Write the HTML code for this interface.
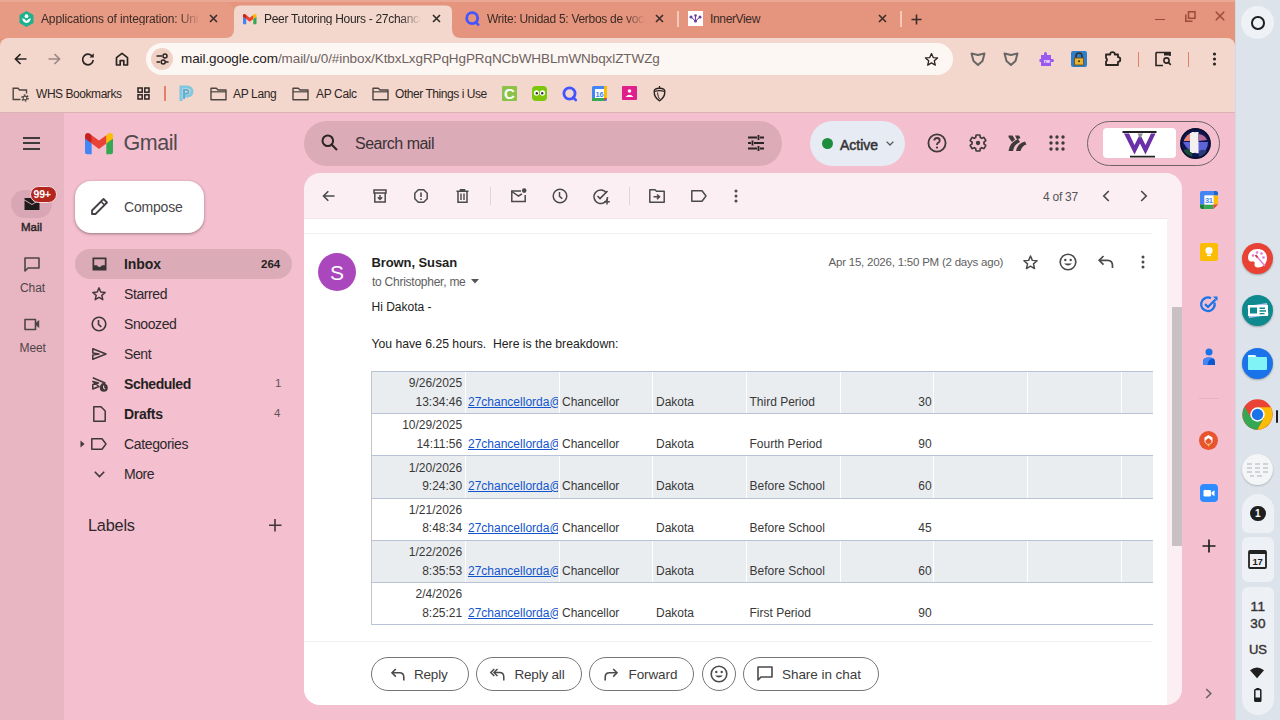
<!DOCTYPE html>
<html><head><meta charset="utf-8">
<style>
*{box-sizing:border-box;margin:0;padding:0}
html,body{width:1280px;height:720px;overflow:hidden;background:#F4BFCF;font-family:"Liberation Sans",sans-serif;color:#202124}
.a{position:absolute}
svg.a{overflow:visible}
.t{position:absolute;white-space:nowrap;line-height:1}
.fade{-webkit-mask-image:linear-gradient(90deg,#000 84%,transparent 97%)}
</style></head><body>
<!-- ===== TAB STRIP ===== -->
<div class="a" style="left:0;top:0;width:1235px;height:50px;background:#E5947D"></div>
<div class="a" style="left:0;top:0;width:1235px;height:1.5px;background:#EAA793"></div>
<!-- hovered tab 1 -->
<div class="a" style="left:-8px;top:2px;width:242px;height:36px;background:#E79B85;border-radius:9px"></div>
<!-- active tab -->
<svg class="a" style="left:0;top:0" width="1235" height="40"><path d="M225,38 Q234,38 234,29 L234,11.5 Q234,5.5 240,5.5 L446,5.5 Q452,5.5 452,11.5 L452,29 Q452,38 461,38 Z" fill="#F3D7CD"/></svg>
<!-- tab 1 content -->
<svg class="a" style="left:19px;top:11px" width="15" height="16" viewBox="0 0 15 16"><path d="M7.5,0 L14.5,4 L14.5,12 L7.5,16 L0.5,12 L0.5,4Z" fill="#1FB08D"/><circle cx="7.5" cy="5.2" r="1.9" fill="#fff"/><path d="M3.2,7.3 Q3.5,11.5 7.5,12 Q11.5,11.5 11.8,7.3 Q9.5,7.6 7.5,10 Q5.5,7.6 3.2,7.3Z" fill="#fff"/></svg>
<div class="t fade" style="left:41px;top:12.7px;font-size:12px;color:#3B2A25;width:164px;overflow:hidden;letter-spacing:-0.15px">Applications of integration: Uni</div>
<svg class="a" style="left:209px;top:14px" width="9" height="9"><path d="M1,1L8,8M8,1L1,8" stroke="#3A2E2A" stroke-width="1.6"/></svg>
<!-- tab 2 active -->
<svg class="a" style="left:242.5px;top:13.5px" width="13.5" height="10.3" viewBox="3 8 42 32"><path fill="#34A853" d="M45,16.2l-5,2.75l-5,4.75L35,40h7c1.657,0,3-1.343,3-3V16.2z"/><path fill="#4285F4" d="M3,16.2l3.614,1.71L13,23.7V40H6c-1.657,0-3-1.343-3-3V16.2z"/><polygon fill="#EA4335" points="35,11.2 24,19.45 13,11.2 12,17 13,23.7 24,31.95 35,23.7 36,17"/><path fill="#C5221F" d="M3,12.298V16.2l10,7.5V11.2L9.876,8.859C9.132,8.301,8.228,8,7.298,8h0C4.924,8,3,9.924,3,12.298z"/><path fill="#FBBC04" d="M45,12.298V16.2l-10,7.5V11.2l3.124-2.341C38.868,8.301,39.772,8,40.702,8h0C43.076,8,45,9.924,45,12.298z"/></svg>
<div class="t fade" style="left:264px;top:12.7px;font-size:12px;color:#2A2624;width:162px;overflow:hidden;letter-spacing:-0.3px">Peer Tutoring Hours - 27chancellorda</div>
<svg class="a" style="left:432px;top:14px" width="9" height="9"><path d="M1,1L8,8M8,1L1,8" stroke="#2E2A28" stroke-width="1.6"/></svg>
<!-- tab 3 -->
<svg class="a" style="left:465px;top:11px" width="15" height="15" viewBox="0 0 15 15"><circle cx="7.2" cy="7.2" r="5.5" stroke="#4255FF" stroke-width="2.8" fill="none"/><path d="M10.8,11.2 L13.2,13.6" stroke="#4255FF" stroke-width="2.6" stroke-linecap="round"/></svg>
<div class="t fade" style="left:487px;top:12.7px;font-size:12px;color:#3B2A25;width:163px;overflow:hidden;letter-spacing:-0.28px">Write: Unidad 5: Verbos de vocabulario</div>
<svg class="a" style="left:655px;top:14px" width="9" height="9"><path d="M1,1L8,8M8,1L1,8" stroke="#3A2E2A" stroke-width="1.6"/></svg>
<div class="a" style="left:677px;top:11px;width:1.5px;height:16px;background:#F5C8BA"></div>
<!-- tab 4 -->
<div class="a" style="left:688px;top:11px;width:15px;height:15px;background:#fff"></div>
<svg class="a" style="left:688px;top:11px" width="15" height="15"><g fill="#6B3FA0"><circle cx="3" cy="6" r="1.5"/><circle cx="12" cy="6" r="1.5"/><circle cx="7.5" cy="4.5" r="1.3"/><circle cx="7.5" cy="10" r="1.6"/></g><path d="M3,6L7.5,10L12,6M7.5,4.5V10" stroke="#6B3FA0" stroke-width="1" fill="none"/></svg>
<div class="t" style="left:710px;top:12.7px;font-size:12px;color:#3B2A25;letter-spacing:-0.35px">InnerView</div>
<svg class="a" style="left:878px;top:14px" width="9" height="9"><path d="M1,1L8,8M8,1L1,8" stroke="#3A2E2A" stroke-width="1.6"/></svg>
<div class="a" style="left:900px;top:11px;width:1.5px;height:16px;background:#F5C8BA"></div>
<svg class="a" style="left:911px;top:14px" width="11" height="11"><path d="M5.5,0.5V10.5M0.5,5.5H10.5" stroke="#3A2E2A" stroke-width="1.6"/></svg>
<!-- window controls -->
<div class="a" style="left:1155px;top:18.5px;width:10px;height:1.6px;background:#9B4B37"></div>
<svg class="a" style="left:1185px;top:11px" width="11" height="11"><rect x="3.5" y="0.8" width="6.5" height="6.5" stroke="#9B4B37" stroke-width="1.5" fill="none"/><path d="M0.8,3.5V10.2H7.5" stroke="#9B4B37" stroke-width="1.5" fill="none"/></svg>
<svg class="a" style="left:1215px;top:11px" width="10" height="10"><path d="M0.8,0.8L9.2,9.2M9.2,0.8L0.8,9.2" stroke="#9B4B37" stroke-width="1.5"/></svg>

<!-- ===== TOOLBAR ===== -->
<div class="a" style="left:0;top:37.5px;width:1235px;height:74.5px;background:#F3D7CD;border-radius:8px 8px 0 0"></div>
<div class="a" style="left:0;top:112px;width:1235px;height:1px;background:#D9B3B6"></div>
<!-- nav -->
<svg class="a" style="left:14px;top:53px" width="13" height="12"><path d="M12.5,6H1.5M6.5,1L1.5,6L6.5,11" stroke="#2B2522" stroke-width="1.7" fill="none"/></svg>
<svg class="a" style="left:48px;top:53px" width="13" height="12"><path d="M0.5,6H11.5M6.5,1L11.5,6L6.5,11" stroke="#9C8984" stroke-width="1.7" fill="none"/></svg>
<svg class="a" style="left:81px;top:52px" width="14" height="14"><path d="M11.3,4.5A5.3,5.3 0 1 0 12.2,8" stroke="#2B2522" stroke-width="1.7" fill="none"/><path d="M12.8,1.3V5.6H8.5Z" fill="#2B2522"/></svg>
<svg class="a" style="left:115px;top:52px" width="14" height="14"><path d="M1.5,13V5.7L7,1.3L12.5,5.7V13H8.8V8.6H5.2V13Z" stroke="#2B2522" stroke-width="1.7" fill="none" stroke-linejoin="round"/></svg>
<!-- omnibox -->
<div class="a" style="left:146px;top:43px;width:807px;height:32px;background:#FDF7F4;border-radius:16px"></div>
<div class="a" style="left:151px;top:48px;width:22px;height:22px;background:#F0D1C6;border-radius:11px"></div>
<svg class="a" style="left:156px;top:53px" width="13" height="12"><path d="M0.5,3H6M0.5,9H4" stroke="#2B2522" stroke-width="1.5"/><circle cx="9" cy="3" r="2" stroke="#2B2522" stroke-width="1.5" fill="none"/><circle cx="7.2" cy="9" r="2" stroke="#2B2522" stroke-width="1.5" fill="none"/><path d="M9.3,9H12.5" stroke="#2B2522" stroke-width="1.5"/></svg>
<div class="t" style="left:181px;top:52.3px;font-size:13.5px;color:#1F1B19;letter-spacing:-0.09px">mail.google.com<span style="color:#6F625E">/mail/u/0/#inbox/KtbxLxgRPqHgPRqNCbWHBLmWNbqxlZTWZg</span></div>
<svg class="a" style="left:924px;top:52px" width="15" height="15" viewBox="0 0 24 24"><path d="M12,2.5L14.8,8.9L21.7,9.5L16.5,14.1L18.1,20.9L12,17.3L5.9,20.9L7.5,14.1L2.3,9.5L9.2,8.9Z" stroke="#2B2522" stroke-width="2.1" fill="none" stroke-linejoin="round"/></svg>
<!-- extensions -->
<svg class="a" style="left:970px;top:51px" width="16" height="16" viewBox="0 0 16 16"><path d="M1.5,2.5L8,4L14.5,2.5L12.5,10L8,14L3.5,10Z" stroke="#6A6665" stroke-width="2" fill="none" stroke-linejoin="round"/></svg>
<svg class="a" style="left:1003px;top:51px" width="16" height="16" viewBox="0 0 16 16"><path d="M1.5,2.5L8,4L14.5,2.5L12.5,10L8,14L3.5,10Z" stroke="#6A6665" stroke-width="2" fill="none" stroke-linejoin="round"/></svg>
<svg class="a" style="left:1038px;top:51px" width="16" height="16" viewBox="0 0 16 16"><path d="M3,4H6V2.5A1.5,1.5 0 0 1 9,2.5V4H13V8H14.5A1.5,1.5 0 0 1 14.5,11H13V15H3V11H1.5V8H3Z" fill="#9B59F0"/><text x="6" y="12" font-size="5" fill="#fff" font-family="Liberation Sans" font-weight="bold">rw</text></svg>
<div class="a" style="left:1071px;top:51px;width:16px;height:16px;background:#2F7FC8;border-radius:2px"></div>
<svg class="a" style="left:1071px;top:51px" width="16" height="16"><path d="M5,7V5A3,3 0 0 1 11,5V7" stroke="#333" stroke-width="1.6" fill="none"/><rect x="3.5" y="7" width="9" height="7" fill="#E9B330" stroke="#6b4a12" stroke-width=".8"/><circle cx="8" cy="10.3" r="1" fill="#333"/></svg>
<svg class="a" style="left:1104px;top:50px" width="18" height="18" viewBox="0 0 18 18"><path d="M2,4.5H6.2A2.3,2.3 0 0 1 10.8,4.5H14V7.2A2.3,2.3 0 0 1 14,11.8V15H2V11.5A2,2 0 0 0 2,8Z" stroke="#2B2522" stroke-width="1.8" fill="none" stroke-linejoin="round"/></svg>
<div class="a" style="left:1138px;top:52px;width:1.2px;height:15px;background:#E5806B"></div>
<svg class="a" style="left:1155px;top:51px" width="17" height="16" viewBox="0 0 17 16"><path d="M1,1.5H15V5" stroke="#2B2522" stroke-width="1.6" fill="none"/><path d="M1,1.5V14.5H8" stroke="#2B2522" stroke-width="1.6" fill="none"/><rect x="9" y="1" width="6.5" height="3.5" fill="#2B2522"/><circle cx="11.5" cy="9.5" r="2.6" stroke="#2B2522" stroke-width="1.6" fill="none"/><path d="M13.4,11.4L15.8,13.8" stroke="#2B2522" stroke-width="1.7"/></svg>
<div class="a" style="left:1188px;top:52px;width:1.2px;height:15px;background:#E5806B"></div>
<svg class="a" style="left:1212px;top:52px" width="5" height="15"><circle cx="2.5" cy="2" r="1.6" fill="#2B2522"/><circle cx="2.5" cy="7" r="1.6" fill="#2B2522"/><circle cx="2.5" cy="12" r="1.6" fill="#2B2522"/></svg>

<!-- ===== BOOKMARKS ===== -->
<svg class="a" style="left:12px;top:87px" width="18" height="15" viewBox="0 0 18 15"><path d="M8.5,12.5H1.2V1.2H6L7.6,3H14.5V6.5" stroke="#4E4541" stroke-width="1.4" fill="none"/><circle cx="13" cy="11" r="3" stroke="#4E4541" stroke-width="1.6" stroke-dasharray="1.6 1.54" fill="none"/><circle cx="13" cy="11" r="1.9" stroke="#4E4541" stroke-width="1.1" fill="none"/></svg>
<div class="t" style="left:36px;top:88px;font-size:12px;color:#2E2623;letter-spacing:-0.45px">WHS Bookmarks</div>
<svg class="a" style="left:137px;top:87px" width="13" height="13"><rect x="1" y="1" width="4.2" height="4.2" stroke="#2B2522" stroke-width="1.5" fill="none"/><rect x="7.8" y="1" width="4.2" height="4.2" stroke="#2B2522" stroke-width="1.5" fill="none"/><rect x="1" y="7.8" width="4.2" height="4.2" stroke="#2B2522" stroke-width="1.5" fill="none"/><rect x="7.8" y="7.8" width="4.2" height="4.2" stroke="#2B2522" stroke-width="1.5" fill="none"/></svg>
<div class="a" style="left:164px;top:86px;width:1.5px;height:15px;background:#E5806B"></div>
<svg class="a" style="left:179px;top:85px" width="15" height="17" viewBox="0 0 15 17"><path d="M2,16V2H8.5A4.5,4.5 0 0 1 8.5,11H5" stroke="#7FC8E0" stroke-width="3" fill="none"/><path d="M5,14V5H8.3A1.8,1.8 0 0 1 8.3,8.5H6" stroke="#5AB3D6" stroke-width="2" fill="none"/></svg>
<svg class="a" style="left:210px;top:87px" width="17" height="14" viewBox="0 0 17 14"><path d="M1,1.2H6.3L8,3H16V12.8H1Z" stroke="#4E4541" stroke-width="1.4" fill="none" stroke-linejoin="round"/><path d="M1,4.8H16" stroke="#4E4541" stroke-width="1.2"/></svg>
<div class="t" style="left:233px;top:88px;font-size:12px;color:#2E2623;letter-spacing:-0.35px">AP Lang</div>
<svg class="a" style="left:292px;top:87px" width="17" height="14" viewBox="0 0 17 14"><path d="M1,1.2H6.3L8,3H16V12.8H1Z" stroke="#4E4541" stroke-width="1.4" fill="none" stroke-linejoin="round"/><path d="M1,4.8H16" stroke="#4E4541" stroke-width="1.2"/></svg>
<div class="t" style="left:316px;top:88px;font-size:12px;color:#2E2623;letter-spacing:-0.35px">AP Calc</div>
<svg class="a" style="left:372px;top:87px" width="17" height="14" viewBox="0 0 17 14"><path d="M1,1.2H6.3L8,3H16V12.8H1Z" stroke="#4E4541" stroke-width="1.4" fill="none" stroke-linejoin="round"/><path d="M1,4.8H16" stroke="#4E4541" stroke-width="1.2"/></svg>
<div class="t" style="left:395px;top:88px;font-size:12px;color:#2E2623;letter-spacing:-0.45px">Other Things i Use</div>
<!-- bookmark favicons -->
<div class="a" style="left:502px;top:86px;width:15px;height:15px;background:#8BC34A;border-radius:1px"></div>
<div class="t" style="left:504px;top:86px;font-size:15px;font-weight:bold;color:#fff">C</div>
<div class="a" style="left:532px;top:86px;width:15px;height:15px;background:#7AC70C;border-radius:4px"></div>
<svg class="a" style="left:532px;top:86px" width="15" height="15"><ellipse cx="4.5" cy="7" rx="2.6" ry="2.8" fill="#fff"/><ellipse cx="10.5" cy="7" rx="2.6" ry="2.8" fill="#fff"/><circle cx="4.8" cy="7.2" r="1.2" fill="#333"/><circle cx="10.2" cy="7.2" r="1.2" fill="#333"/><path d="M6.5,10L7.5,11.5L8.5,10Z" fill="#F49000"/></svg>
<svg class="a" style="left:562px;top:86px" width="16" height="16"><circle cx="7.5" cy="7.5" r="5.6" stroke="#4255FF" stroke-width="2.8" fill="none"/><path d="M11.2,11.5L13.8,14" stroke="#4255FF" stroke-width="2.6" stroke-linecap="round"/></svg>
<svg class="a" style="left:592px;top:86px" width="15" height="15" viewBox="0 0 15 15"><rect x="0" y="0" width="15" height="15" rx="1.5" fill="#4285F4"/><rect x="12" y="0" width="3" height="12" fill="#FBBC04"/><rect x="0" y="12" width="12" height="3" fill="#34A853"/><path d="M12,12H15L12,15Z" fill="#EA4335"/><rect x="3" y="3" width="9" height="9" fill="#fff"/><text x="3.4" y="10.8" font-size="7.5" fill="#4285F4" font-family="Liberation Sans" font-weight="bold">16</text></svg>
<div class="a" style="left:622px;top:86px;width:15px;height:14px;background:#E01E8C;border-radius:1px"></div>
<svg class="a" style="left:622px;top:86px" width="15" height="14"><circle cx="7.5" cy="5" r="1.8" fill="#fff"/><path d="M3.5,11Q7.5,6.5 11.5,11Z" fill="#fff"/></svg>
<svg class="a" style="left:653px;top:85px" width="13" height="17" viewBox="0 0 13 17"><path d="M6.5,1V3.2" stroke="#2B2522" stroke-width="1.3"/><path d="M1.2,6.5Q1,3.3 6.5,3.3Q12,3.3 11.8,6.5Q12,12.5 6.5,15.8Q1,12.5 1.2,6.5Z" stroke="#2B2522" stroke-width="1.4" fill="none"/><path d="M1.5,6.5Q6.5,4.8 11.5,6.5" stroke="#2B2522" stroke-width="1.3" fill="none"/><path d="M4.5,7.5Q5,12 6.5,14" stroke="#2B2522" stroke-width="1" fill="none"/></svg>

<!-- ===== SHELF ===== -->
<div class="a" style="left:1235px;top:0;width:45px;height:720px;background:#DCE3EA;border-left:1px solid #D2D9E0"></div>
<div class="a" style="left:1241px;top:6px;width:33px;height:33px;background:#EEF1F6;border-radius:50%"></div>
<div class="a" style="left:1251px;top:16px;width:13.5px;height:13.5px;border:2.2px solid #1F1F1F;border-radius:50%"></div>

<!-- ===== GMAIL ===== -->
<div class="a" style="left:0;top:113px;width:64px;height:607px;background:#E8B5C3"></div>
<!-- hamburger -->
<div class="a" style="left:23px;top:136.5px;width:17px;height:2px;background:#3F3A3C"></div>
<div class="a" style="left:23px;top:142px;width:17px;height:2px;background:#3F3A3C"></div>
<div class="a" style="left:23px;top:147.5px;width:17px;height:2px;background:#3F3A3C"></div>
<!-- M logo -->
<svg class="a" style="left:85px;top:133px" width="28" height="21.3" viewBox="3 8 42 32"><path fill="#34A853" d="M45,16.2l-5,2.75l-5,4.75L35,40h7c1.657,0,3-1.343,3-3V16.2z"/><path fill="#4285F4" d="M3,16.2l3.614,1.71L13,23.7V40H6c-1.657,0-3-1.343-3-3V16.2z"/><polygon fill="#EA4335" points="35,11.2 24,19.45 13,11.2 12,17 13,23.7 24,31.95 35,23.7 36,17"/><path fill="#C5221F" d="M3,12.298V16.2l10,7.5V11.2L9.876,8.859C9.132,8.301,8.228,8,7.298,8h0C4.924,8,3,9.924,3,12.298z"/><path fill="#FBBC04" d="M45,12.298V16.2l-10,7.5V11.2l3.124-2.341C38.868,8.301,39.772,8,40.702,8h0C43.076,8,45,9.924,45,12.298z"/></svg>
<div class="t" style="left:123.5px;top:132.8px;font-size:21.5px;color:#4F4B4D;letter-spacing:-0.45px">Gmail</div>
<!-- rail -->
<div class="a" style="left:11px;top:190px;width:41px;height:28px;background:#D8A6B4;border-radius:14px"></div>
<svg class="a" style="left:24px;top:197px" width="16" height="14" viewBox="0 0 16 14"><path d="M0.5,3.5L8,8L15.5,3.5V13H0.5Z" fill="#1F1B1D"/><path d="M0.5,1H15.5V2.5L8,7L0.5,2.5Z" fill="#1F1B1D"/></svg>
<div class="a" style="left:30px;top:185.5px;width:27px;height:17.5px;background:#B3261E;border:1.5px solid #F6DDE3;border-radius:9px"></div>
<div class="t" style="left:33.5px;top:189px;font-size:10.5px;font-weight:bold;color:#fff;letter-spacing:-0.2px">99+</div>
<div class="t" style="left:21px;top:222px;font-size:11.5px;-webkit-text-stroke:0.45px #2B2527;color:#2B2527;letter-spacing:0px">Mail</div>
<svg class="a" style="left:24px;top:257px" width="16" height="15" viewBox="0 0 16 15"><path d="M1,1H15V11H4L1,14Z" stroke="#4E4548" stroke-width="1.6" fill="none" stroke-linejoin="round"/></svg>
<div class="t" style="left:20px;top:282.4px;font-size:12px;color:#4E4548;letter-spacing:-0.1px">Chat</div>
<svg class="a" style="left:24px;top:318px" width="16" height="13" viewBox="0 0 16 13"><path d="M1,1.5H11.5V11.5H1Z" stroke="#4E4548" stroke-width="1.6" fill="none" stroke-linejoin="round"/><path d="M11.5,5L15.2,2V10L11.5,7Z" fill="#4E4548"/></svg>
<div class="t" style="left:19.5px;top:342px;font-size:12px;color:#4E4548;letter-spacing:-0.1px">Meet</div>
<!-- compose -->
<div class="a" style="left:75px;top:181px;width:129px;height:52px;background:#fff;border-radius:16px;box-shadow:0 1px 2px rgba(60,40,50,.3),0 1px 3px 1px rgba(60,40,50,.15)"></div>
<svg class="a" style="left:90px;top:197px" width="19" height="19" viewBox="0 0 19 19"><path d="M2,17V13.5L13.5,2L17,5.5L5.5,17Z" stroke="#444046" stroke-width="1.8" fill="none" stroke-linejoin="round"/><path d="M11,4.5L14.5,8" stroke="#444046" stroke-width="1.6"/></svg>
<div class="t" style="left:124px;top:200px;font-size:14px;color:#4A4649;letter-spacing:-0.2px">Compose</div>
<!-- nav list -->
<div class="a" style="left:75px;top:249px;width:217px;height:30px;background:#DCABB8;border-radius:15px"></div>
<svg class="a" style="left:92px;top:257px" width="15" height="14" viewBox="0 0 15 14"><path d="M0.5,0.5H14.5V13.5H0.5Z" fill="#3B3437"/><path d="M2.2,2.2H12.8V8.2H10Q9.3,10 7.5,10Q5.7,10 5,8.2H2.2Z" fill="#DCABB8"/></svg>
<div class="t" style="left:124px;top:257px;font-size:14px;font-weight:bold;color:#241F21;letter-spacing:-0.1px">Inbox</div>
<div class="t" style="left:261px;top:258.8px;font-size:11.5px;font-weight:bold;color:#241F21">264</div>
<svg class="a" style="left:91px;top:286px" width="16" height="16" viewBox="0 0 24 24"><path d="M12,2.8L14.6,9L21.3,9.6L16.2,14L17.7,20.6L12,17.2L6.3,20.6L7.8,14L2.7,9.6L9.4,9Z" stroke="#3F383B" stroke-width="2.2" fill="none" stroke-linejoin="round"/></svg>
<div class="t" style="left:124px;top:287px;font-size:14px;color:#2E282B;letter-spacing:-0.4px">Starred</div>
<svg class="a" style="left:91px;top:316px" width="16" height="16" viewBox="0 0 16 16"><circle cx="8" cy="8" r="6.8" stroke="#3F383B" stroke-width="1.6" fill="none"/><path d="M7.5,4V8.3L10.3,10.8" stroke="#3F383B" stroke-width="1.6" fill="none"/></svg>
<div class="t" style="left:124px;top:317px;font-size:14px;color:#2E282B;letter-spacing:-0.4px">Snoozed</div>
<svg class="a" style="left:92px;top:348px" width="15" height="12" viewBox="0 0 15 12"><path d="M0.8,0.8L14,6L0.8,11.2V7L7,6L0.8,5Z" stroke="#3F383B" stroke-width="1.5" fill="none" stroke-linejoin="round"/></svg>
<div class="t" style="left:124px;top:347px;font-size:14px;color:#2E282B;letter-spacing:-0.4px">Sent</div>
<svg class="a" style="left:92px;top:377px" width="16" height="15" viewBox="0 0 16 15"><path d="M0.8,0.8L13,6L9.5,7.5M7,9.5L0.8,12V7.5L6.5,6L0.8,4.5Z" stroke="#3F383B" stroke-width="1.5" fill="none" stroke-linejoin="round"/><circle cx="11.8" cy="10.8" r="4" fill="#3F383B"/><path d="M11.6,8.6V11L13.1,12.1" stroke="#F4BFCF" stroke-width="1.1" fill="none"/></svg>
<div class="t" style="left:124px;top:377px;font-size:14px;font-weight:bold;color:#241F21;letter-spacing:-0.45px">Scheduled</div>
<div class="t" style="left:275px;top:378px;font-size:11.5px;color:#5C5457">1</div>
<svg class="a" style="left:93px;top:406px" width="13" height="16" viewBox="0 0 13 16"><path d="M0.8,0.8H8L12.2,5V15.2H0.8Z" stroke="#3F383B" stroke-width="1.5" fill="none" stroke-linejoin="round"/></svg>
<div class="t" style="left:124px;top:407px;font-size:14px;font-weight:bold;color:#241F21;letter-spacing:-0.3px">Drafts</div>
<div class="t" style="left:274px;top:408px;font-size:11.5px;color:#5C5457">4</div>
<svg class="a" style="left:80px;top:440px" width="5" height="8"><path d="M0.5,0.5L4.5,4L0.5,7.5Z" fill="#3F383B"/></svg>
<svg class="a" style="left:91px;top:438px" width="16" height="12" viewBox="0 0 16 12"><path d="M0.8,0.8H11L15,6L11,11.2H0.8Z" stroke="#3F383B" stroke-width="1.5" fill="none" stroke-linejoin="round"/></svg>
<div class="t" style="left:124px;top:437px;font-size:14px;color:#2E282B;letter-spacing:-0.35px">Categories</div>
<svg class="a" style="left:94px;top:471px" width="11" height="7"><path d="M0.8,0.8L5.5,5.5L10.2,0.8" stroke="#3F383B" stroke-width="1.6" fill="none"/></svg>
<div class="t" style="left:124px;top:467px;font-size:14px;color:#2E282B;letter-spacing:-0.45px">More</div>
<div class="t" style="left:88px;top:517px;font-size:16.3px;color:#2E282B;letter-spacing:-0.2px">Labels</div>
<svg class="a" style="left:269px;top:519px" width="12" height="12"><path d="M6,0V12.5M0,6.2H12.5" stroke="#3F383B" stroke-width="1.6"/></svg>

<!-- header -->
<div class="a" style="left:304px;top:121px;width:478px;height:45px;background:#DCABB8;border-radius:23px"></div>
<svg class="a" style="left:321px;top:134px" width="17" height="17" viewBox="0 0 17 17"><circle cx="6.8" cy="6.8" r="5.3" stroke="#2A2426" stroke-width="2" fill="none"/><path d="M10.6,10.6L16,16" stroke="#2A2426" stroke-width="2.1"/></svg>
<div class="t" style="left:355px;top:135.6px;font-size:16px;color:#3A3235;letter-spacing:-0.5px">Search mail</div>
<svg class="a" style="left:747px;top:134px" width="18" height="18" viewBox="0 0 18 18"><path d="M1,3.5H10M13,3.5H17M1,9H4M7,9H17M1,14.5H10M13,14.5H17" stroke="#2A2426" stroke-width="1.9"/><path d="M11.5,1V6M5.5,6.5V11.5M11.5,12V17" stroke="#2A2426" stroke-width="1.9"/></svg>
<div class="a" style="left:810px;top:121px;width:95px;height:45px;background:#E7EBF3;border-radius:23px"></div>
<div class="a" style="left:821.5px;top:137.5px;width:11px;height:11px;background:#1E8E3E;border-radius:50%"></div>
<div class="t" style="left:840px;top:137.5px;font-size:14px;-webkit-text-stroke:0.5px #353235;color:#353235;letter-spacing:0px">Active</div>
<svg class="a" style="left:886px;top:141px" width="8" height="5"><path d="M0.6,0.6L4,4L7.4,0.6" stroke="#555" stroke-width="1.3" fill="none"/></svg>
<svg class="a" style="left:927px;top:133px" width="20" height="20" viewBox="0 0 20 20"><circle cx="10" cy="10" r="8.6" stroke="#3F3A3C" stroke-width="1.8" fill="none"/><path d="M7.3,7.6Q7.3,5 10,5Q12.7,5 12.7,7.4Q12.7,9 10.8,10Q10,10.5 10,12" stroke="#3F3A3C" stroke-width="1.8" fill="none"/><circle cx="10" cy="14.6" r="1.1" fill="#3F3A3C"/></svg>
<svg class="a" style="left:968px;top:133px" width="20" height="20" viewBox="0 0 24 24"><path d="M19.14,12.94c.04-.3.06-.61.06-.94 0-.32-.02-.64-.07-.94l2.03-1.58c.18-.14.23-.41.12-.61l-1.92-3.32c-.12-.22-.37-.29-.59-.22l-2.39.96c-.5-.38-1.03-.7-1.62-.94L14.4,2.81c-.04-.24-.24-.41-.48-.41h-3.84c-.24,0-.43.17-.47.41L9.25,5.35C8.66,5.59 8.12,5.92 7.63,6.29L5.24,5.33c-.22-.08-.47,0-.59.22L2.74,8.87C2.62,9.08 2.66,9.34 2.86,9.48l2.03,1.58C4.84,11.36 4.8,11.69 4.8,12s.02.64.07.94l-2.03,1.58c-.18.14-.23.41-.12.61l1.92,3.32c.12.22.37.29.59.22l2.39-.96c.5.38 1.03.7 1.62.94l.36,2.54c.05.24.24.41.48.41h3.84c.24,0 .44-.17.47-.41l.36-2.54c.59-.24 1.13-.56 1.62-.94l2.39.96c.22.08.47,0 .59-.22l1.92-3.32c.12-.22.07-.47-.12-.61L19.14,12.94z" stroke="#3F3A3C" stroke-width="2" fill="none"/><circle cx="12" cy="12" r="2.6" fill="#3F3A3C"/></svg>
<svg class="a" style="left:1008px;top:135px" width="19" height="16" viewBox="0 0 19 16"><path d="M0.5,0.5H4.5L7,4.5L4,7L0.5,2Z" fill="#3F3A3C"/><path d="M0.5,16Q2,7 10,4L12,7Q6,9.5 5,16Z" fill="#3F3A3C"/><path d="M7,0.5H11L12.5,3L9,4.5Z" fill="#3F3A3C"/><path d="M8,16Q9.5,8 17,6.5L18.5,9.5Q14,10.5 12.5,16Z" fill="#3F3A3C"/></svg>
<svg class="a" style="left:1049px;top:135px" width="16" height="16"><g fill="#3F3A3C"><circle cx="2" cy="2" r="1.7"/><circle cx="8" cy="2" r="1.7"/><circle cx="14" cy="2" r="1.7"/><circle cx="2" cy="8" r="1.7"/><circle cx="8" cy="8" r="1.7"/><circle cx="14" cy="8" r="1.7"/><circle cx="2" cy="14" r="1.7"/><circle cx="8" cy="14" r="1.7"/><circle cx="14" cy="14" r="1.7"/></g></svg>
<div class="a" style="left:1087px;top:121px;width:133px;height:45px;border:1px solid #6E6468;border-radius:23px"></div>
<div class="a" style="left:1103px;top:128px;width:73px;height:30px;background:#fff;border-radius:4px"></div>
<svg class="a" style="left:1099px;top:128px" width="73" height="30" viewBox="0 0 73 30"><path d="M23.5,4H57.5M31,28.6H56" stroke="#222" stroke-width="1.8"/><path d="M25,5.5L35.5,26.5L41,15.5L46.5,26.5L56.5,5.5H52L46.5,17L41,6L35.5,17L30,5.5Z" fill="#6B2FA8"/><path d="M38.5,5.5H44L41.2,10.5Z" fill="#8a8a8a"/></svg>
<svg class="a" style="left:1180px;top:127.5px" width="31" height="31" viewBox="0 0 31 31"><defs><clipPath id="av"><circle cx="15.5" cy="15.5" r="15"/></clipPath></defs><g clip-path="url(#av)"><rect width="31" height="31" fill="#0E1650"/><path d="M4,12Q7,6 12,5L12,13H4Z" fill="#E98878"/><path d="M19,6Q25,7 27,12L19,13Z" fill="#B86A9A"/><path d="M3,14H28Q28,23 20,26Q9,26 3,14Z" fill="#5F63D8"/><path d="M4,22Q9,19 13,24L11,31H4Z" fill="#1A4A3A"/><path d="M19,23Q24,20 27,24L26,31H19Z" fill="#2A3A7A"/><rect x="11.5" y="4" width="7" height="21" fill="#F4F0F4"/><rect x="14.5" y="4" width="1" height="21" fill="#B8B0C0"/></g><circle cx="15.5" cy="15.5" r="14.6" stroke="#0A0F2E" stroke-width="1.6" fill="none"/></svg>
<div class="a" style="left:1190px;top:133px;width:8px;height:19px;background:#F4F0F2"></div>

<!-- main panel -->
<div class="a" style="left:304px;top:173px;width:878px;height:532px;background:#FCEFF3;border-radius:16px;overflow:hidden">
  <div class="a" style="left:0;top:46px;width:863px;height:486px;background:#fff"></div>
  <div class="a" style="left:0;top:45px;width:863px;height:1px;background:#F2E6EA"></div>
  <div class="a" style="left:0;top:60px;width:848px;height:1px;background:#EEF0F2"></div>
  <div class="a" style="left:868px;top:134px;width:10px;height:239px;background:#C9C0C3"></div>
</div>
<!-- panel toolbar -->
<svg class="a" style="left:322px;top:190px" width="13" height="12" viewBox="0 0 13 12"><path d="M12.5,6H1.5M6.3,1.2L1.5,6L6.3,10.8" stroke="#4A4A4A" stroke-width="1.6" fill="none"/></svg>
<svg class="a" style="left:373px;top:189px" width="14" height="14" viewBox="0 0 14 14"><path d="M1,1H13V4H1Z" stroke="#4A4A4A" stroke-width="1.5" fill="none"/><path d="M1.8,4V13H12.2V4" stroke="#4A4A4A" stroke-width="1.5" fill="none"/><path d="M7,6V10.5M4.8,8.3L7,10.5L9.2,8.3" stroke="#4A4A4A" stroke-width="1.5" fill="none"/></svg>
<svg class="a" style="left:414px;top:189px" width="14" height="14" viewBox="0 0 14 14"><path d="M4.3,0.8H9.7L13.2,4.3V9.7L9.7,13.2H4.3L0.8,9.7V4.3Z" stroke="#4A4A4A" stroke-width="1.5" fill="none" stroke-linejoin="round"/><path d="M7,3.5V8" stroke="#4A4A4A" stroke-width="1.6"/><circle cx="7" cy="10.2" r=".9" fill="#4A4A4A"/></svg>
<svg class="a" style="left:456px;top:189px" width="13" height="14" viewBox="0 0 13 14"><path d="M0.5,2.2H12.5M4.5,2.2V0.8H8.5V2.2" stroke="#4A4A4A" stroke-width="1.5" fill="none"/><path d="M2,2.2V13.2H11V2.2" stroke="#4A4A4A" stroke-width="1.5" fill="none"/><path d="M5,4.5V11M8,4.5V11" stroke="#4A4A4A" stroke-width="1.4"/></svg>
<div class="a" style="left:490px;top:187px;width:1px;height:18px;background:#E3D5DA"></div>
<svg class="a" style="left:511px;top:188px" width="16" height="15" viewBox="0 0 16 15"><path d="M10,3H0.8V13.5H14.2V7" stroke="#4A4A4A" stroke-width="1.5" fill="none"/><path d="M0.8,3.5L7.5,8L11,5.8" stroke="#4A4A4A" stroke-width="1.5" fill="none"/><circle cx="13.2" cy="2.6" r="2.3" fill="#4A4A4A"/></svg>
<svg class="a" style="left:552px;top:188px" width="16" height="16" viewBox="0 0 16 16"><circle cx="8" cy="8" r="6.8" stroke="#4A4A4A" stroke-width="1.5" fill="none"/><path d="M7.5,4V8.3L10.3,10.8" stroke="#4A4A4A" stroke-width="1.5" fill="none"/></svg>
<svg class="a" style="left:593px;top:188px" width="18" height="17" viewBox="0 0 18 17"><path d="M13.5,5A6.8,6.8 0 1 0 14.6,9" stroke="#4A4A4A" stroke-width="1.5" fill="none"/><path d="M4.5,8L7,10.5L14.5,3" stroke="#4A4A4A" stroke-width="1.6" fill="none"/><path d="M14,11V16.5M11.2,13.8H16.8" stroke="#4A4A4A" stroke-width="1.5"/></svg>
<div class="a" style="left:629px;top:187px;width:1px;height:18px;background:#E3D5DA"></div>
<svg class="a" style="left:649px;top:189px" width="16" height="14" viewBox="0 0 16 14"><path d="M0.8,0.8H6L7.5,2.3H15.2V13.2H0.8Z" stroke="#4A4A4A" stroke-width="1.5" fill="none" stroke-linejoin="round"/><path d="M4.5,7.8H10M8,5.5L10.5,7.8L8,10.1" stroke="#4A4A4A" stroke-width="1.5" fill="none"/></svg>
<svg class="a" style="left:691px;top:190px" width="16" height="12" viewBox="0 0 16 12"><path d="M0.8,0.8H11L15,6L11,11.2H0.8Z" stroke="#4A4A4A" stroke-width="1.5" fill="none" stroke-linejoin="round"/></svg>
<svg class="a" style="left:734px;top:189px" width="4" height="14"><circle cx="2" cy="2" r="1.5" fill="#4A4A4A"/><circle cx="2" cy="7" r="1.5" fill="#4A4A4A"/><circle cx="2" cy="12" r="1.5" fill="#4A4A4A"/></svg>
<div class="t" style="left:1043px;top:191.2px;font-size:12px;color:#555;letter-spacing:-0.25px">4 of 37</div>
<svg class="a" style="left:1102px;top:190px" width="8" height="12"><path d="M6.8,1L1.8,6L6.8,11" stroke="#4A4A4A" stroke-width="1.7" fill="none"/></svg>
<svg class="a" style="left:1140px;top:190px" width="8" height="12"><path d="M1.2,1L6.2,6L1.2,11" stroke="#4A4A4A" stroke-width="1.7" fill="none"/></svg>
<!-- email -->
<div class="a" style="left:318px;top:253px;width:38px;height:38px;background:#AB47BC;border-radius:50%"></div>
<div class="a" style="left:318px;top:253px;width:38px;height:38px;line-height:39px;text-align:center;font-size:21px;color:#fff">S</div>
<div class="t" style="left:371.5px;top:256px;font-size:13px;font-weight:bold;color:#1F1F1F;letter-spacing:-0.1px">Brown, Susan</div>
<div class="t" style="left:372px;top:276.3px;font-size:12px;color:#5E5E5E;letter-spacing:-0.25px">to Christopher, me</div>
<svg class="a" style="left:471px;top:279px" width="8" height="5"><path d="M0,0H8L4,4.5Z" fill="#555"/></svg>
<div class="t" style="left:828.5px;top:256.5px;font-size:11.5px;color:#5E5E5E;letter-spacing:-0.22px">Apr 15, 2026, 1:50 PM (2 days ago)</div>
<svg class="a" style="left:1022px;top:254px" width="17" height="17" viewBox="0 0 24 24"><path d="M12,2.8L14.6,9L21.3,9.6L16.2,14L17.7,20.6L12,17.2L6.3,20.6L7.8,14L2.7,9.6L9.4,9Z" stroke="#4A4A4A" stroke-width="2.1" fill="none" stroke-linejoin="round"/></svg>
<svg class="a" style="left:1059px;top:253px" width="18" height="18" viewBox="0 0 18 18"><circle cx="9" cy="9" r="7.8" stroke="#4A4A4A" stroke-width="1.6" fill="none"/><circle cx="6.3" cy="7" r="1.2" fill="#4A4A4A"/><circle cx="11.7" cy="7" r="1.2" fill="#4A4A4A"/><path d="M5,10.5Q9,14.5 13,10.5Z" fill="#4A4A4A"/></svg>
<svg class="a" style="left:1098px;top:255px" width="16" height="14" viewBox="0 0 16 14"><path d="M5.5,1L1.2,5.3L5.5,9.6" stroke="#4A4A4A" stroke-width="1.7" fill="none"/><path d="M1.5,5.3H9.5Q14.5,5.3 14.5,10.5V13" stroke="#4A4A4A" stroke-width="1.7" fill="none"/></svg>
<svg class="a" style="left:1141px;top:255px" width="4" height="14"><circle cx="2" cy="2" r="1.5" fill="#4A4A4A"/><circle cx="2" cy="7" r="1.5" fill="#4A4A4A"/><circle cx="2" cy="12" r="1.5" fill="#4A4A4A"/></svg>
<div class="t" style="left:371.5px;top:301px;font-size:12px;color:#222">Hi Dakota -</div>
<div class="t" style="left:371.5px;top:338px;font-size:12.2px;color:#222;white-space:pre">You have 6.25 hours.  Here is the breakdown:</div>
<div class="a" style="left:371px;top:370.5px;width:782px;height:255px;overflow:hidden">
<div class="a" style="left:0;top:0.5px;width:782px;height:42.2px;background:#EAEDF0;border-top:1px solid #B8C3D8"></div>
<div class="a" style="left:93.9px;top:1.5px;width:1px;height:41.2px;background:#fff"></div>
<div class="a" style="left:187.5px;top:1.5px;width:1px;height:41.2px;background:#fff"></div>
<div class="a" style="left:281.1px;top:1.5px;width:1px;height:41.2px;background:#fff"></div>
<div class="a" style="left:374.8px;top:1.5px;width:1px;height:41.2px;background:#fff"></div>
<div class="a" style="left:468.5px;top:1.5px;width:1px;height:41.2px;background:#fff"></div>
<div class="a" style="left:562.2px;top:1.5px;width:1px;height:41.2px;background:#fff"></div>
<div class="a" style="left:655.9px;top:1.5px;width:1px;height:41.2px;background:#fff"></div>
<div class="a" style="left:749.6px;top:1.5px;width:1px;height:41.2px;background:#fff"></div>
<div class="t" style="right:690.8px;top:6.7px;font-size:12px;color:#383838">9/26/2025</div>
<div class="t" style="right:690.8px;top:25.2px;font-size:12px;color:#383838">13:34:46</div>
<div class="t" style="left:97px;top:25.2px;width:90px;overflow:hidden;font-size:12px;color:#1155CC;text-decoration:underline">27chancellorda@district.org</div>
<div class="t" style="left:191px;top:25.2px;font-size:12px;color:#383838">Chancellor</div>
<div class="t" style="left:285px;top:25.2px;font-size:12px;color:#383838">Dakota</div>
<div class="t" style="left:378.5px;top:25.2px;font-size:12px;color:#383838">Third Period</div>
<div class="t" style="right:221.3px;top:25.2px;font-size:12px;color:#383838">30</div>
<div class="a" style="left:0;top:42.7px;width:782px;height:42.2px;background:#FFFFFF;border-top:1px solid #B8C3D8"></div>
<div class="t" style="right:690.8px;top:48.9px;font-size:12px;color:#383838">10/29/2025</div>
<div class="t" style="right:690.8px;top:67.4px;font-size:12px;color:#383838">14:11:56</div>
<div class="t" style="left:97px;top:67.4px;width:90px;overflow:hidden;font-size:12px;color:#1155CC;text-decoration:underline">27chancellorda@district.org</div>
<div class="t" style="left:191px;top:67.4px;font-size:12px;color:#383838">Chancellor</div>
<div class="t" style="left:285px;top:67.4px;font-size:12px;color:#383838">Dakota</div>
<div class="t" style="left:378.5px;top:67.4px;font-size:12px;color:#383838">Fourth Period</div>
<div class="t" style="right:221.3px;top:67.4px;font-size:12px;color:#383838">90</div>
<div class="a" style="left:0;top:84.9px;width:782px;height:42.2px;background:#EAEDF0;border-top:1px solid #B8C3D8"></div>
<div class="a" style="left:93.9px;top:85.9px;width:1px;height:41.2px;background:#fff"></div>
<div class="a" style="left:187.5px;top:85.9px;width:1px;height:41.2px;background:#fff"></div>
<div class="a" style="left:281.1px;top:85.9px;width:1px;height:41.2px;background:#fff"></div>
<div class="a" style="left:374.8px;top:85.9px;width:1px;height:41.2px;background:#fff"></div>
<div class="a" style="left:468.5px;top:85.9px;width:1px;height:41.2px;background:#fff"></div>
<div class="a" style="left:562.2px;top:85.9px;width:1px;height:41.2px;background:#fff"></div>
<div class="a" style="left:655.9px;top:85.9px;width:1px;height:41.2px;background:#fff"></div>
<div class="a" style="left:749.6px;top:85.9px;width:1px;height:41.2px;background:#fff"></div>
<div class="t" style="right:690.8px;top:91.1px;font-size:12px;color:#383838">1/20/2026</div>
<div class="t" style="right:690.8px;top:109.6px;font-size:12px;color:#383838">9:24:30</div>
<div class="t" style="left:97px;top:109.6px;width:90px;overflow:hidden;font-size:12px;color:#1155CC;text-decoration:underline">27chancellorda@district.org</div>
<div class="t" style="left:191px;top:109.6px;font-size:12px;color:#383838">Chancellor</div>
<div class="t" style="left:285px;top:109.6px;font-size:12px;color:#383838">Dakota</div>
<div class="t" style="left:378.5px;top:109.6px;font-size:12px;color:#383838">Before School</div>
<div class="t" style="right:221.3px;top:109.6px;font-size:12px;color:#383838">60</div>
<div class="a" style="left:0;top:127.1px;width:782px;height:42.2px;background:#FFFFFF;border-top:1px solid #B8C3D8"></div>
<div class="t" style="right:690.8px;top:133.3px;font-size:12px;color:#383838">1/21/2026</div>
<div class="t" style="right:690.8px;top:151.8px;font-size:12px;color:#383838">8:48:34</div>
<div class="t" style="left:97px;top:151.8px;width:90px;overflow:hidden;font-size:12px;color:#1155CC;text-decoration:underline">27chancellorda@district.org</div>
<div class="t" style="left:191px;top:151.8px;font-size:12px;color:#383838">Chancellor</div>
<div class="t" style="left:285px;top:151.8px;font-size:12px;color:#383838">Dakota</div>
<div class="t" style="left:378.5px;top:151.8px;font-size:12px;color:#383838">Before School</div>
<div class="t" style="right:221.3px;top:151.8px;font-size:12px;color:#383838">45</div>
<div class="a" style="left:0;top:169.3px;width:782px;height:42.2px;background:#EAEDF0;border-top:1px solid #B8C3D8"></div>
<div class="a" style="left:93.9px;top:170.3px;width:1px;height:41.2px;background:#fff"></div>
<div class="a" style="left:187.5px;top:170.3px;width:1px;height:41.2px;background:#fff"></div>
<div class="a" style="left:281.1px;top:170.3px;width:1px;height:41.2px;background:#fff"></div>
<div class="a" style="left:374.8px;top:170.3px;width:1px;height:41.2px;background:#fff"></div>
<div class="a" style="left:468.5px;top:170.3px;width:1px;height:41.2px;background:#fff"></div>
<div class="a" style="left:562.2px;top:170.3px;width:1px;height:41.2px;background:#fff"></div>
<div class="a" style="left:655.9px;top:170.3px;width:1px;height:41.2px;background:#fff"></div>
<div class="a" style="left:749.6px;top:170.3px;width:1px;height:41.2px;background:#fff"></div>
<div class="t" style="right:690.8px;top:175.5px;font-size:12px;color:#383838">1/22/2026</div>
<div class="t" style="right:690.8px;top:194.0px;font-size:12px;color:#383838">8:35:53</div>
<div class="t" style="left:97px;top:194.0px;width:90px;overflow:hidden;font-size:12px;color:#1155CC;text-decoration:underline">27chancellorda@district.org</div>
<div class="t" style="left:191px;top:194.0px;font-size:12px;color:#383838">Chancellor</div>
<div class="t" style="left:285px;top:194.0px;font-size:12px;color:#383838">Dakota</div>
<div class="t" style="left:378.5px;top:194.0px;font-size:12px;color:#383838">Before School</div>
<div class="t" style="right:221.3px;top:194.0px;font-size:12px;color:#383838">60</div>
<div class="a" style="left:0;top:211.5px;width:782px;height:42.2px;background:#FFFFFF;border-top:1px solid #B8C3D8"></div>
<div class="t" style="right:690.8px;top:217.7px;font-size:12px;color:#383838">2/4/2026</div>
<div class="t" style="right:690.8px;top:236.2px;font-size:12px;color:#383838">8:25:21</div>
<div class="t" style="left:97px;top:236.2px;width:90px;overflow:hidden;font-size:12px;color:#1155CC;text-decoration:underline">27chancellorda@district.org</div>
<div class="t" style="left:191px;top:236.2px;font-size:12px;color:#383838">Chancellor</div>
<div class="t" style="left:285px;top:236.2px;font-size:12px;color:#383838">Dakota</div>
<div class="t" style="left:378.5px;top:236.2px;font-size:12px;color:#383838">First Period</div>
<div class="t" style="right:221.3px;top:236.2px;font-size:12px;color:#383838">90</div>
<div class="a" style="left:0;top:253.2px;width:782px;height:1px;background:#B8C3D8"></div>
<div class="a" style="left:0;top:0;width:1px;height:254px;background:#C4C4C4"></div>
</div>
<div class="a" style="left:304px;top:641px;width:848px;height:1px;background:#EEF0F2"></div>
<div class="a" style="left:371px;top:657px;width:97.5px;border:1px solid #747775;border-radius:17px;height:34px"></div>
<svg class="a" style="left:391px;top:668px" width="14" height="13" viewBox="0 0 14 13"><path d="M4.8,1L1,4.8L4.8,8.6" stroke="#4A4A4A" stroke-width="1.6" fill="none"/><path d="M1.3,4.8H8.5Q12.8,4.8 12.8,9.3V12.5" stroke="#4A4A4A" stroke-width="1.6" fill="none"/></svg>
<div class="t" style="left:414px;top:667.7px;font-size:13.5px;color:#3C3C3C;letter-spacing:-0.2px">Reply</div>
<div class="a" style="left:476px;top:657px;width:105.5px;border:1px solid #747775;border-radius:17px;height:34px"></div>
<svg class="a" style="left:490px;top:668px" width="15" height="13" viewBox="0 0 15 13"><path d="M4.3,1L0.8,4.5L4.3,8" stroke="#4A4A4A" stroke-width="1.5" fill="none"/><path d="M7.5,1L4,4.5L7.5,8" stroke="#4A4A4A" stroke-width="1.5" fill="none"/><path d="M4.2,4.5H9.5Q13.8,4.5 13.8,9V12.5" stroke="#4A4A4A" stroke-width="1.5" fill="none"/></svg>
<div class="t" style="left:514.5px;top:667.7px;font-size:13.5px;color:#3C3C3C;letter-spacing:-0.2px">Reply all</div>
<div class="a" style="left:589px;top:657px;width:105px;border:1px solid #747775;border-radius:17px;height:34px"></div>
<svg class="a" style="left:604px;top:668px" width="14" height="13" viewBox="0 0 14 13"><path d="M9.2,1L13,4.8L9.2,8.6" stroke="#4A4A4A" stroke-width="1.6" fill="none"/><path d="M12.7,4.8H5.5Q1.2,4.8 1.2,9.3V12.5" stroke="#4A4A4A" stroke-width="1.6" fill="none"/></svg>
<div class="t" style="left:628.5px;top:667.7px;font-size:13.5px;color:#3C3C3C;letter-spacing:-0.1px">Forward</div>
<div class="a" style="left:702px;top:657px;width:34px;border:1px solid #747775;border-radius:17px;height:34px"></div>
<svg class="a" style="left:710px;top:665px" width="18" height="18" viewBox="0 0 18 18"><circle cx="9" cy="9" r="7.8" stroke="#4A4A4A" stroke-width="1.6" fill="none"/><circle cx="6.3" cy="7" r="1.2" fill="#4A4A4A"/><circle cx="11.7" cy="7" r="1.2" fill="#4A4A4A"/><path d="M5,10.5Q9,14.5 13,10.5Z" fill="#4A4A4A"/></svg>
<div class="a" style="left:743px;top:657px;width:135.5px;border:1px solid #747775;border-radius:17px;height:34px"></div>
<svg class="a" style="left:757px;top:666px" width="16" height="15" viewBox="0 0 16 15"><path d="M1,1H15V11H4L1,14Z" stroke="#4A4A4A" stroke-width="1.6" fill="none" stroke-linejoin="round"/></svg>
<div class="t" style="left:782px;top:667.7px;font-size:13.5px;color:#3C3C3C;letter-spacing:-0.05px">Share in chat</div>
<!-- side panel -->
<svg class="a" style="left:1200px;top:191px" width="18" height="18" viewBox="0 0 18 18"><path d="M0,2Q0,0 2,0H13.5V4.5H4.5V13.5H0Z" fill="#4285F4"/><path d="M13.5,0H16Q18,0 18,2V4.5H13.5Z" fill="#1967D2"/><path d="M13.5,4.5H18V13.5H13.5Z" fill="#FBBC04"/><path d="M0,13.5H4.5V18H2Q0,18 0,16Z" fill="#188038"/><path d="M4.5,13.5H13.5V18H4.5Z" fill="#34A853"/><path d="M13.5,13.5H18L13.5,18Z" fill="#EA4335"/><rect x="4.5" y="4.5" width="9" height="9" fill="#fff"/><text x="5" y="12.3" font-size="7.5" font-weight="bold" fill="#4285F4" font-family="Liberation Sans" letter-spacing="-0.3">31</text></svg>
<div class="a" style="left:1200px;top:243px;width:18px;height:18px;background:#FBBC04;border-radius:2px"></div>
<svg class="a" style="left:1200px;top:243px" width="18" height="18"><circle cx="9" cy="7.5" r="3.6" fill="#fff"/><rect x="7" y="11.5" width="4" height="1.6" fill="#fff"/></svg>
<svg class="a" style="left:1200px;top:296px" width="18" height="17" viewBox="0 0 18 17"><path d="M14.5,6.5A6.8,6.8 0 1 1 11,2.2" stroke="#1A73E8" stroke-width="2.3" fill="none"/><path d="M5,8.2L8,11L15.5,3.5" stroke="#1A73E8" stroke-width="2.3" fill="none"/><path d="M13,0.5L17.5,0.5L17.5,5Z" fill="#1A73E8"/></svg>
<svg class="a" style="left:1202px;top:348px" width="14" height="17" viewBox="0 0 14 17"><circle cx="7" cy="4" r="3.5" fill="#1A73E8"/><path d="M1,17V13.5Q1,9.5 7,9.5Q13,9.5 13,13.5V17Z" fill="#0B57D0"/><path d="M1,13.5Q1,9.5 7,9.5Q10,9.5 11.5,10.5Q6,10.5 5.5,17H1Z" fill="#4285F4"/></svg>
<div class="a" style="left:1199px;top:398px;width:20px;height:1px;background:#E8B0C0"></div>
<svg class="a" style="left:1199px;top:431px" width="19" height="19" viewBox="0 0 19 19"><circle cx="9.5" cy="9.5" r="9.5" fill="#E8542E"/><path d="M5.5,6.5L9.5,4L13.5,6.5V11Q11.5,14 9.5,14Q7.5,14 5.5,11Z" fill="#fff"/><path d="M6.5,9.5L9.5,7L12.5,9.5V11.5Q11,13 9.5,13Q8,13 6.5,11.5Z" fill="#E8542E"/><path d="M8.2,13.5H10.8L9.5,16Z" fill="#F8C300"/></svg>
<div class="a" style="left:1200px;top:484px;width:18px;height:18px;background:#2D8CFF;border-radius:4px"></div>
<svg class="a" style="left:1200px;top:484px" width="18" height="18"><rect x="3.5" y="6" width="7.5" height="6.5" rx="1.2" fill="#fff"/><path d="M11.5,8.2L14.5,6.2V12.3L11.5,10.3Z" fill="#fff"/></svg>
<svg class="a" style="left:1202px;top:539px" width="14" height="14"><path d="M7,0.5V13.5M0.5,7H13.5" stroke="#1F1F1F" stroke-width="1.7"/></svg>
<svg class="a" style="left:1205px;top:688px" width="7" height="11"><path d="M1.2,1L5.8,5.5L1.2,10" stroke="#6E6468" stroke-width="1.6" fill="none"/></svg>

<!-- shelf apps -->
<div class="a" style="left:1242px;top:243px;width:31px;height:31px;border-radius:50%;background:#E94235;box-shadow:0 1px 2px rgba(0,0,0,.3)"></div>
<svg class="a" style="left:1245px;top:247px" width="25" height="23" viewBox="0 0 25 23"><path d="M12.5,2C6,2 3,6.5 3,10.5C3,14 5.5,15 7.5,14.5C9.5,14 10,15.5 9.5,17C9,19 10.5,20.5 13,20.5C18.5,20.5 22,16 22,11C22,5.5 18,2 12.5,2Z" fill="#fff"/><circle cx="8" cy="8.5" r="1.3" fill="#E27ADB"/><circle cx="12" cy="5.5" r="1.3" fill="#E27ADB"/><circle cx="16.5" cy="6.5" r="1.3" fill="#E27ADB"/><circle cx="18.5" cy="10.5" r="1.3" fill="#E27ADB"/><path d="M11,8.5L20,19" stroke="#E27ADB" stroke-width="1.5"/><path d="M10.5,8L12.5,10.5" stroke="#D23F31" stroke-width="2"/></svg>
<div class="a" style="left:1242px;top:295px;width:31px;height:31px;border-radius:50%;background:#0E8A8E;box-shadow:0 1px 2px rgba(0,0,0,.3)"></div>
<svg class="a" style="left:1246px;top:301px" width="24" height="19" viewBox="0 0 24 19"><path d="M1.5,5L21,2L22.5,14L3,17Z" fill="#B7C4F0"/><path d="M2,4H22V15H2Z" fill="#fff"/><rect x="4" y="6.5" width="7" height="6" fill="#0E8A8E"/><rect x="13.5" y="6.5" width="5.5" height="1.5" fill="#0E8A8E"/><rect x="13.5" y="9.2" width="6.5" height="1.5" fill="#0E8A8E"/><rect x="13.5" y="12" width="5" height="1.3" fill="#0E8A8E"/></svg>
<div class="a" style="left:1242px;top:347.5px;width:31px;height:31px;border-radius:50%;background:#1A73E8;box-shadow:0 1px 2px rgba(0,0,0,.3)"></div>
<svg class="a" style="left:1248px;top:355px" width="19" height="15" viewBox="0 0 19 15"><path d="M0,1Q0,0 1,0H7L8.5,2H18Q19,2 19,3V14Q19,15 18,15H1Q0,15 0,14Z" fill="#7FF3F5"/><path d="M0,1Q0,0 1,0H7L8.5,2H0Z" fill="#E8FCFD"/></svg>
<svg class="a" style="left:1241.7px;top:399.3px" width="31" height="31" viewBox="0 0 31 31"><circle cx="15.5" cy="15.5" r="15.2" fill="#EA4335"/><path d="M15.5,8.3H28.66A15.2,15.2 0 0 1 15.16,30.7L21.74,19.1Z" fill="#FBBC04"/><path d="M21.74,19.1L15.16,30.7A15.2,15.2 0 0 1 2.68,7.7L9.26,19.1Z" fill="#34A853"/><circle cx="15.5" cy="15.5" r="7.2" fill="#fff"/><circle cx="15.5" cy="15.5" r="5.7" fill="#1A73E8"/></svg>
<div class="a" style="left:1275.5px;top:409.5px;width:2.5px;height:13px;background:#1F1F1F;border-radius:1px"></div>
<div class="a" style="left:1242px;top:453.5px;width:31px;height:31px;border-radius:50%;background:#F4F5F7;box-shadow:0 1px 2px rgba(0,0,0,.2)"></div>
<svg class="a" style="left:1245px;top:461px" width="25" height="17"><g stroke="#9AA0A6" stroke-width=".8"><path d="M2,3H7M10,3H15M18,3H23M2,7H7M10,7H15M18,7H23M2,11H7M10,11H15M18,11H23M5,15H9M12,15H17"/></g></svg>
<!-- pods -->
<div class="a" style="left:1242px;top:494px;width:32px;height:39px;background:#EDF0F5;border-radius:16px 16px 6px 6px"></div>
<div class="a" style="left:1250px;top:505.5px;width:15.5px;height:15.5px;border-radius:50%;background:#1F1F1F"></div>
<div class="t" style="left:1250px;width:15.5px;text-align:center;top:508.5px;font-size:10px;font-weight:bold;color:#fff">1</div>
<div class="a" style="left:1242px;top:537px;width:32px;height:45px;background:#EDF0F5;border-radius:6px"></div>
<svg class="a" style="left:1248px;top:550px" width="19" height="19" viewBox="0 0 19 19"><rect x="1" y="1" width="17" height="17" rx="1" stroke="#222" stroke-width="1.8" fill="none"/><rect x="1" y="1" width="17" height="3" fill="#222"/><text x="9.5" y="15.3" text-anchor="middle" font-size="9.5" font-weight="bold" fill="#222" font-family="Liberation Sans" letter-spacing="-0.2">17</text></svg>
<div class="a" style="left:1242px;top:587px;width:32px;height:128px;background:#EDF0F5;border-radius:6px 6px 16px 16px"></div>
<div class="t" style="left:1242px;width:32px;text-align:center;top:599.5px;font-size:13.5px;-webkit-text-stroke:0.4px #333;color:#333;letter-spacing:0.6px">11</div>
<div class="t" style="left:1242px;width:32px;text-align:center;top:616.8px;font-size:13.5px;-webkit-text-stroke:0.4px #333;color:#333;letter-spacing:0.3px">30</div>
<div class="t" style="left:1242px;width:32px;text-align:center;top:643px;font-size:13px;-webkit-text-stroke:0.4px #333;color:#333">US</div>
<svg class="a" style="left:1250.4px;top:666.5px" width="14" height="12"><path d="M0,3.2Q7,-2 14,3.2L7,11.3Z" fill="#1F1F1F"/></svg>
<svg class="a" style="left:1253.8px;top:688px" width="8" height="14"><rect x="2.3" y="0" width="3" height="2" fill="#1F1F1F"/><rect x="0.8" y="1.6" width="6" height="11.6" rx="0.8" stroke="#1F1F1F" stroke-width="1.5" fill="none"/><rect x="0.8" y="9.5" width="6" height="3.7" fill="#1F1F1F"/></svg>


</body></html>
